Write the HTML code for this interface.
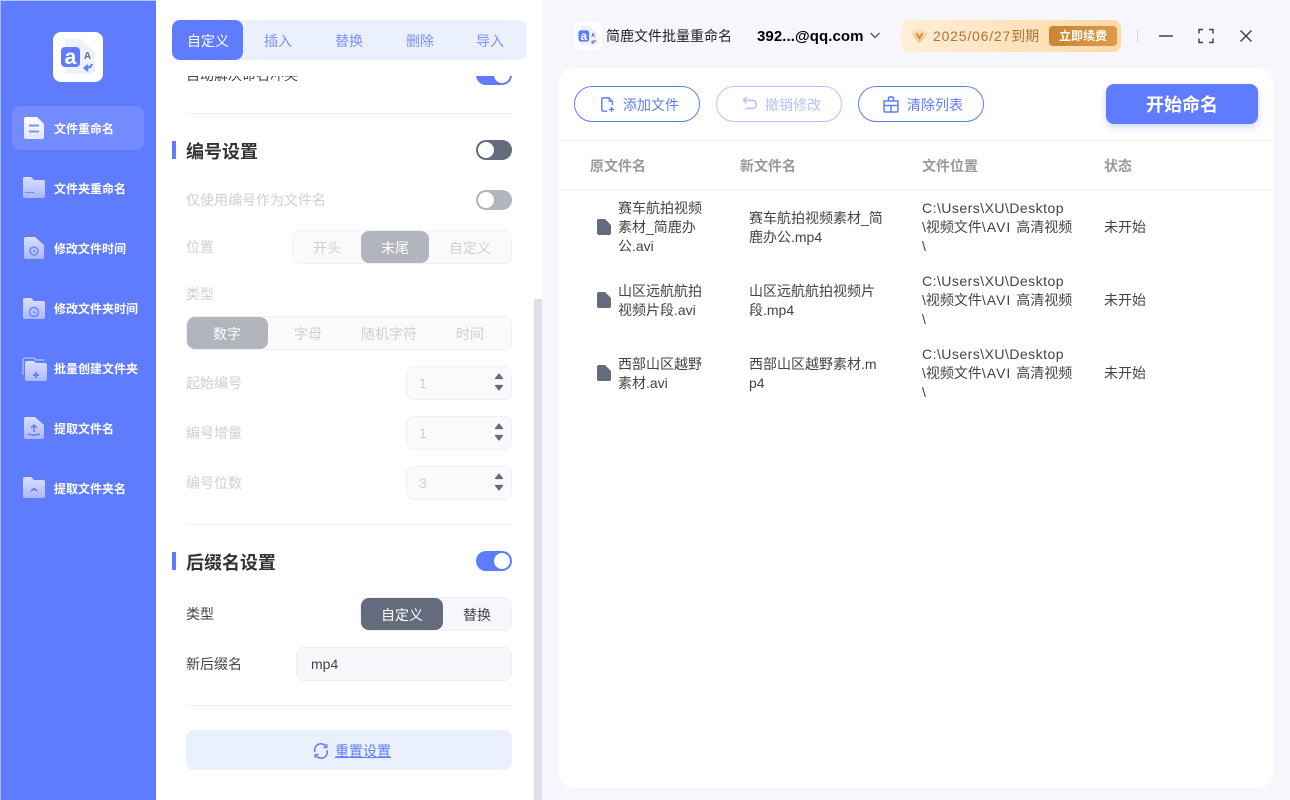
<!DOCTYPE html>
<html lang="zh-CN"><head><meta charset="utf-8"><title>简鹿文件批量重命名</title>
<style>
*{box-sizing:border-box;margin:0;padding:0}
html,body{width:1290px;height:800px;overflow:hidden;background:#f6f7fc;font-family:"Liberation Sans","Noto Sans CJK SC",sans-serif}
.a{position:absolute}
.t{position:absolute;white-space:nowrap;font-size:14px;line-height:20px;height:20px}
.c{transform:translateX(-50%)}
.side{left:0;top:0;width:156px;height:800px;background:#5f7cff;border-left:1px solid #a9b8fb;border-top:1px solid #b9c5fb}
.nav{left:54px;font-size:12px;font-weight:700;color:#fff}
.dim{color:#d0d0d0}
.div{position:absolute;left:186px;width:326px;height:1px;background:#f0f1f4}
.bar{position:absolute;left:172px;width:4px;height:18px;background:#5f7cff}
.h{left:186px;font-size:18px;font-weight:700;color:#333;line-height:24px;height:24px}
.tg{position:absolute;left:476px;width:36px;height:20px;border-radius:10px}
.tg i{position:absolute;top:2px;width:16px;height:16px;border-radius:50%;background:#fff}
.seg{position:absolute;height:34px;border:1px solid #f0f1f4;border-radius:8px;background:#fafafc}
.act{position:absolute;height:32px;border-radius:8px}
.inp{position:absolute;left:406px;width:106px;height:34px;border:1px solid #f0f1f4;border-radius:8px;background:#fafafc}
.btn{position:absolute;top:86px;width:126px;height:36px;border:1px solid #5f7cff;border-radius:18px}
.hd{font-weight:700;color:#999;top:156px}
.cell{color:#444;line-height:19px;height:auto}
.p1{letter-spacing:.47px}
.p2{letter-spacing:1px}
svg{position:absolute;overflow:visible}
</style></head><body>

<div class="a side"></div>
<div class="a" style="left:53px;top:32px;width:50px;height:50px;background:#fff;border-radius:8px"></div>
<svg style="left:53px;top:32px" width="50" height="50" viewBox="0 0 50 50">
<path d="M12 9q0-2 2-2h14l14 13v17q0 5-5 5H14q-2 0-2-2z" fill="#eef2ff"/>
<rect x="8" y="15" width="19" height="20" rx="4" fill="#5f7cff"/>
<text x="17.5" y="32" font-size="21" font-weight="700" fill="#fff" text-anchor="middle" font-family="Liberation Sans,sans-serif">a</text>
<text x="34.5" y="27" font-size="10" font-weight="700" fill="#636b7c" text-anchor="middle" font-family="Liberation Sans,sans-serif">A</text>
<path d="M39 32q-1 4-6 4M35 33l-3.500 3 3.500 3" fill="none" stroke="#5f7cff" stroke-width="2"/>
</svg>
<div class="a" style="left:12px;top:106px;width:132px;height:44px;background:rgba(255,255,255,.12);border-radius:8px"></div>

<svg style="left:0;top:0" width="156" height="520" viewBox="0 0 156 520">
<defs>
<linearGradient id="w" x1="0" y1="0" x2="0" y2="1"><stop offset="0" stop-color="#fff"/><stop offset="1" stop-color="#dfe5ff"/></linearGradient>
<linearGradient id="g" x1="0" y1="0" x2="0" y2="1"><stop offset="0" stop-color="#d9e0ff"/><stop offset="1" stop-color="#a9b8ff"/></linearGradient>
<linearGradient id="d" x1="0" y1="0" x2="0" y2="1"><stop offset="0" stop-color="#fdeacb"/><stop offset="1" stop-color="#f0b865"/></linearGradient>
</defs>
<path d="M24 119q0-2 2-2h11l7 7v13q0 2-2 2H26q-2 0-2-2z" fill="url(#w)"/>
<path d="M29 125.500h10M29 131.500h10" stroke="#7c93ff" stroke-width="2"/>
<path d="M23 179q0-2 2-2h6l3 3h9q2 0 2 2v14q0 2-2 2H25q-2 0-2-2z" fill="url(#g)"/>
<path d="M25 192.500h9" stroke="#6f88ff" stroke-width="1.200"/>
<path d="M24 239q0-2 2-2h9l9 8v12q0 2-2 2H26q-2 0-2-2z" fill="url(#g)"/>
<circle cx="34" cy="251" r="4" fill="none" stroke="#6f88ff" stroke-width="1.500"/><path d="M34 249v2.500h2" fill="none" stroke="#6f88ff"/>
<path d="M23 300q0-2 2-2h6l3 3h9q2 0 2 2v14q0 2-2 2H25q-2 0-2-2z" fill="url(#g)"/>
<circle cx="34" cy="312" r="4.500" fill="none" stroke="#6f88ff" stroke-width="1.500"/><path d="M34 310v2.500h2" fill="none" stroke="#6f88ff"/>
<path d="M23 375v-14q0-3 3-3h8l2 2h9" fill="none" stroke="#c5cfff" stroke-width="1"/>
<path d="M25 363q0-2 2-2h7l2 2h9q2 0 2 2v14q0 2-2 2H27q-2 0-2-2z" fill="url(#g)"/>
<path d="M36 372v6M33 375h6" stroke="#5f7cff" stroke-width="1.800"/>
<path d="M24 419q0-2 2-2h9l9 8v12q0 2-2 2H26q-2 0-2-2z" fill="url(#g)"/>
<path d="M34 432v-6M31 428l3-3 3 3M28 434q6 2 12 0" fill="none" stroke="#6078f5" stroke-width="1.400"/>
<path d="M23 479q0-2 2-2h6l3 3h9q2 0 2 2v14q0 2-2 2H25q-2 0-2-2z" fill="url(#g)"/>
<path d="M31 491l3-2.500 3 2.500" fill="none" stroke="#6078f5" stroke-width="1.500"/>
</svg>
<div class="t nav" style="top:119px">文件重命名</div>
<div class="t nav" style="top:179px">文件夹重命名</div>
<div class="t nav" style="top:239px">修改文件时间</div>
<div class="t nav" style="top:299px">修改文件夹时间</div>
<div class="t nav" style="top:359px">批量创建文件夹</div>
<div class="t nav" style="top:419px">提取文件名</div>
<div class="t nav" style="top:479px">提取文件夹名</div>

<div class="a" style="left:156px;top:0;width:386px;height:800px;background:#fff"></div>
<div class="a" style="left:534px;top:299px;width:8px;height:501px;background:#e0e0ea"></div>

<div class="a" style="left:172px;top:20px;width:354px;height:40px;background:#ebf0fe;border-radius:8px"></div>
<div class="a" style="left:172px;top:20px;width:71px;height:40px;background:#5f7cff;border-radius:8px"></div>
<div class="t c" style="left:208px;top:31px;color:#fff">自定义</div>
<div class="t c" style="left:278px;top:31px;color:#7c93fb">插入</div>
<div class="t c" style="left:349px;top:31px;color:#7c93fb">替换</div>
<div class="t c" style="left:420px;top:31px;color:#7c93fb">删除</div>
<div class="t c" style="left:490px;top:31px;color:#7c93fb">导入</div>

<div class="a" style="left:156px;top:76px;width:378px;height:10px;overflow:hidden">
<div class="t" style="left:30px;top:-11px;color:#444">自动解决命名冲突</div>
<div class="tg" style="left:320px;top:-11px;background:#5f7cff"><i style="right:2px"></i></div>
</div>
<div class="div" style="top:113px"></div>

<div class="bar" style="top:141px"></div>
<div class="t h" style="top:140px">编号设置</div>
<div class="tg" style="top:140px;background:#636b7c"><i style="left:2px"></i></div>
<div class="t dim" style="left:186px;top:190px">仅使用编号作为文件名</div>
<div class="tg" style="top:190px;background:#b2b5bd"><i style="left:2px"></i></div>

<div class="t dim" style="left:186px;top:237px">位置</div>
<div class="seg" style="left:292px;top:230px;width:220px"></div>
<div class="act" style="left:361px;top:231px;width:68px;background:#b2b5bd"></div>
<div class="t c dim" style="left:327px;top:238px">开头</div>
<div class="t c" style="left:395px;top:238px;color:#fff">末尾</div>
<div class="t c dim" style="left:470px;top:238px">自定义</div>

<div class="t dim" style="left:186px;top:284px">类型</div>
<div class="seg" style="left:186px;top:316px;width:326px"></div>
<div class="act" style="left:187px;top:317px;width:81px;background:#b2b5bd"></div>
<div class="t c" style="left:227px;top:324px;color:#fff">数字</div>
<div class="t c dim" style="left:308px;top:324px">字母</div>
<div class="t c dim" style="left:389px;top:324px">随机字符</div>
<div class="t c dim" style="left:470px;top:324px">时间</div>

<div class="t dim" style="left:186px;top:373px">起始编号</div>
<div class="inp" style="top:366px"></div><div class="t dim" style="left:419px;top:373px">1</div>
<div class="t dim" style="left:186px;top:423px">编号增量</div>
<div class="inp" style="top:416px"></div><div class="t dim" style="left:419px;top:423px">1</div>
<div class="t dim" style="left:186px;top:473px">编号位数</div>
<div class="inp" style="top:466px"></div><div class="t dim" style="left:419px;top:473px">3</div>
<svg style="left:0;top:0" width="520" height="500">
<g fill="#636b7c" stroke="#636b7c" stroke-width="1.200" stroke-linejoin="round">
<path d="M499 374l3.500 4.500h-7zM499 390l-3.500-4.500h7z"/>
<path d="M499 424l3.500 4.500h-7zM499 440l-3.500-4.500h7z"/>
<path d="M499 474l3.500 4.500h-7zM499 490l-3.500-4.500h7z"/>
</g></svg>

<div class="div" style="top:524px"></div>
<div class="bar" style="top:552px"></div>
<div class="t h" style="top:551px">后缀名设置</div>
<div class="tg" style="top:551px;background:#5f7cff"><i style="right:2px"></i></div>
<div class="t" style="left:186px;top:604px;color:#444">类型</div>
<div class="seg" style="left:360px;top:597px;width:152px;background:#f6f7fb"></div>
<div class="act" style="left:361px;top:598px;width:82px;background:#636b7c"></div>
<div class="t c" style="left:402px;top:605px;color:#fff">自定义</div>
<div class="t c" style="left:477px;top:605px;color:#444">替换</div>
<div class="t" style="left:186px;top:654px;color:#444">新后缀名</div>
<div class="a" style="left:296px;top:647px;width:216px;height:34px;background:#f6f7fb;border:1px solid #eeeff3;border-radius:8px"></div>
<div class="t" style="left:311px;top:654px;color:#444">mp4</div>
<div class="div" style="top:705px"></div>
<div class="a" style="left:186px;top:730px;width:326px;height:40px;background:#ebf0fe;border-radius:8px"></div>
<svg style="left:313px;top:743px" width="16" height="16" viewBox="0 0 16 16" fill="none" stroke="#5f7cff" stroke-width="1.500">
<path d="M2 9A6.200 6.200 0 0 1 13 3.500M14 7A6.200 6.200 0 0 1 3 12.500"/>
<path d="M13.800 1v3.500h-3.500M2.200 15v-3.500h3.500" stroke-width="1.300"/></svg>
<div class="t" style="left:335px;top:741px;color:#5f7cff;text-decoration:underline">重置设置</div>

<div class="a" style="left:574px;top:22px;width:28px;height:28px;background:#fff;border-radius:6px"></div>
<svg style="left:574px;top:22px" width="28" height="28" viewBox="0 0 50 50">
<path d="M12 9q0-2 2-2h14l14 13v17q0 5-5 5H14q-2 0-2-2z" fill="#eef2ff"/>
<rect x="8" y="15" width="19" height="20" rx="4" fill="#5f7cff"/>
<text x="17.500" y="32" font-size="21" font-weight="700" fill="#fff" text-anchor="middle" font-family="Liberation Sans,sans-serif">a</text>
<text x="34.500" y="27" font-size="10" font-weight="700" fill="#636b7c" text-anchor="middle" font-family="Liberation Sans,sans-serif">A</text>
<path d="M39 32q-1 4-6 4M35 33l-3.500 3 3.500 3" fill="none" stroke="#5f7cff" stroke-width="2"/>
</svg>
<div class="t" style="left:606px;top:26px;color:#222">简鹿文件批量重命名</div>
<div class="t" style="left:757px;top:27px;color:#000;font-weight:700;font-size:15px;letter-spacing:.08px">392...@qq.com</div>
<svg style="left:870px;top:32px" width="10" height="7" fill="none" stroke="#555" stroke-width="1.300"><path d="M.5 1l4.500 4.500L9.500 1"/></svg>

<div class="a" style="left:901px;top:20px;width:220px;height:32px;border-radius:8px;background:linear-gradient(90deg,#ffeed8,#ffd9a6)"></div>
<svg style="left:911px;top:28px" width="17" height="15" viewBox="0 0 17 15">
<path d="M4 1h9l4 4.500-8.500 9.500L0 5.500z" fill="url(#d)"/><path d="M5.500 5l3 5 3-5" fill="none" stroke="#c8852f" stroke-width="1.600"/></svg>
<div class="t" style="left:933px;top:26px;color:#a9743c"><span style="letter-spacing:.8px">2025/06/27</span>到期</div>
<div class="a" style="left:1049px;top:26px;width:68px;height:20px;border-radius:4px;background:linear-gradient(90deg,#c98530,#dc9a4c)"></div>
<div class="t c" style="left:1083px;top:26px;color:#fff;font-size:12px;font-weight:700">立即续费</div>
<div class="a" style="left:1137px;top:30px;width:1px;height:12px;background:#d8d8dc"></div>
<svg style="left:1155px;top:26px" width="100" height="20" fill="none" stroke="#444" stroke-width="1.500">
<path d="M4 10h14"/>
<path d="M44 7.500V3.500h4M54 3.500h4v4M58 12.500v4h-4M48 16.500h-4v-4"/>
<path d="M85.500 4.500l11 11M96.500 4.500l-11 11"/>
</svg>

<div class="a" style="left:558px;top:68px;width:716px;height:720px;background:#fff;border-radius:16px"></div>
<div class="btn" style="left:574px"></div>
<div class="btn" style="left:716px;border-color:#b4c3ff"></div>
<div class="btn" style="left:858px"></div>
<svg style="left:600px;top:96px" width="16" height="18" viewBox="0 0 18 18" fill="none" stroke="#5f7cff" stroke-width="1.600">
<path d="M8 16H4q-2 0-2-2V3q0-2 2-2h6l4 4v4"/><path d="M10 1v4h4" stroke-width="1"/><path d="M13 11v6M10 14h6"/></svg>
<svg style="left:742px;top:96px" width="16" height="15" viewBox="0 0 18 16" fill="none" stroke="#b4c3ff" stroke-width="1.600">
<path d="M5 1L1.500 4.500 5 8M2 4.500h10q4 0 4 4.500t-4 4.500H4"/></svg>
<svg style="left:883px;top:96px" width="16" height="17" viewBox="0 0 16 17" fill="none" stroke="#5f7cff" stroke-width="1.500">
<path d="M5.500 5V2.500q0-1.500 1.500-1.500h2q1.500 0 1.500 1.500V5"/><path d="M1 5h14v9.500q0 1.500-1.500 1.500h-11Q1 16 1 14.500zM1 9.500h14M8 10v6"/></svg>
<div class="t" style="left:623px;top:95px;color:#5f7cff">添加文件</div>
<div class="t" style="left:765px;top:95px;color:#b4c3ff">撤销修改</div>
<div class="t" style="left:907px;top:95px;color:#5f7cff">清除列表</div>
<div class="a" style="left:1106px;top:84px;width:152px;height:40px;background:#5f7cff;border-radius:8px;box-shadow:0 3px 8px rgba(95,124,255,.3)"></div>
<div class="t c" style="left:1182px;top:93px;color:#fff;font-size:18px;font-weight:700;line-height:24px;height:24px">开始命名</div>

<div class="a" style="left:558px;top:140px;width:716px;height:1px;background:#f0f1f4"></div>
<div class="a" style="left:558px;top:189px;width:716px;height:1px;background:#f0f1f4"></div>
<div class="t hd" style="left:590px">原文件名</div>
<div class="t hd" style="left:740px">新文件名</div>
<div class="t hd" style="left:922px">文件位置</div>
<div class="t hd" style="left:1104px">状态</div>

<svg style="left:597px;top:219px" width="14" height="170" fill="#636b7c">
<path d="M0 2q0-2 2-2h6l6 6v8q0 2-2 2H2q-2 0-2-2z"/>
<path d="M0 75q0-2 2-2h6l6 6v8q0 2-2 2H2q-2 0-2-2z"/>
<path d="M0 148q0-2 2-2h6l6 6v8q0 2-2 2H2q-2 0-2-2z"/>
</svg>

<div class="t cell" style="left:618px;top:199px">赛车航拍视频<br>素材_简鹿办<br>公.avi</div>
<div class="t cell" style="left:749px;top:209px">赛车航拍视频素材_简<br>鹿办公.mp4</div>
<div class="t cell" style="left:922px;top:199px"><span class="p1">C:\Users\XU\Desktop</span><br>\视频文件<span class="p2">\AVI </span>高清视频<br>\</div>
<div class="t cell" style="left:1104px;top:218px">未开始</div>

<div class="t cell" style="left:618px;top:282px">山区远航航拍<br>视频片段.avi</div>
<div class="t cell" style="left:749px;top:282px">山区远航航拍视频片<br>段.mp4</div>
<div class="t cell" style="left:922px;top:272px"><span class="p1">C:\Users\XU\Desktop</span><br>\视频文件<span class="p2">\AVI </span>高清视频<br>\</div>
<div class="t cell" style="left:1104px;top:291px">未开始</div>

<div class="t cell" style="left:618px;top:355px">西部山区越野<br>素材.avi</div>
<div class="t cell" style="left:749px;top:355px">西部山区越野素材.m<br>p4</div>
<div class="t cell" style="left:922px;top:345px"><span class="p1">C:\Users\XU\Desktop</span><br>\视频文件<span class="p2">\AVI </span>高清视频<br>\</div>
<div class="t cell" style="left:1104px;top:364px">未开始</div>

</body></html>
